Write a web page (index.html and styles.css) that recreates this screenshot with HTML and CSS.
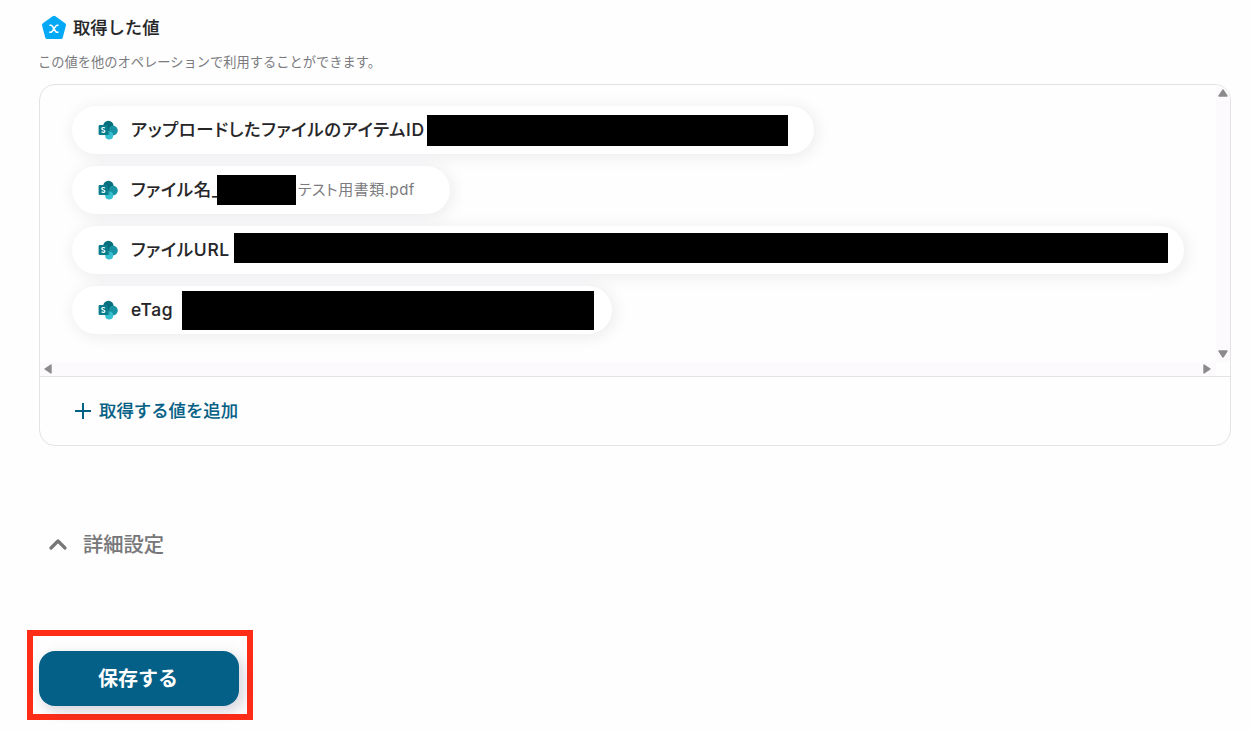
FILE: index.html
```
<!DOCTYPE html>
<html lang="ja">
<head>
<meta charset="UTF-8">
<meta name="viewport" content="width=device-width, initial-scale=1.0">
<title>取得した値</title>
<link rel="stylesheet" href="styles.css">
</head>
<body>
<svg class="defs" xmlns="http://www.w3.org/2000/svg">
    <symbol id="sharepoint" viewBox="0 0 20 20">
        <circle cx="10.4" cy="5.9" r="5.2" fill="#056f7d"/>
        <circle cx="15" cy="10.6" r="4.8" fill="#1893a3"/>
        <circle cx="11.2" cy="15.4" r="4" fill="#35bfd0"/>
        <path d="M7 5.5h4.5v9.5H7z" fill="#03494d" opacity=".3"/>
        <rect x="0.6" y="5" width="9.6" height="10" rx="1" fill="#087e8c"/>
        <path d="M7 8C5.8 7.2 3.8 7.4 3.8 8.7c0 1.5 3.1 1 3.1 2.5 0 1.3-2.1 1.4-3.3.6" fill="none" stroke="#fff" stroke-width="1.2"/>
    </symbol>
</svg>
<div class="page">
    <div class="section-title">
        <svg class="title-icon" xmlns="http://www.w3.org/2000/svg" viewBox="0 0 26 26">
            <path d="M11.6 1.3a2.3 2.3 0 0 1 2.8 0l9.7 7a2 2 0 0 1 .8 2.4l-3.2 12a2 2 0 0 1-2 1.4H6.3a2 2 0 0 1-2-1.4l-3.2-12a2 2 0 0 1 .8-2.4z" fill="#03a9f4"/>
            <path d="M8.4 10.3h1.4c2.8 0 3.6 7 6.4 7h1.4M17.5 10.3h-1.1c-2.8 0-4.2 7-7 7H8.2" fill="none" stroke="#fff" stroke-width="1.6"/>
        </svg>
        <h2>取得した値</h2>
    </div>
    <p class="description">この値を他のオペレーションで利用することができます。</p>

    <div class="values-box">
        <div class="values-scroll">
            <div class="value-list">
                <div class="value-item item-id">
                    <svg class="value-icon"><use href="#sharepoint"/></svg>
                    <span class="value-name">アップロードしたファイルのアイテムID</span>
                    <span class="mask"></span>
                </div>
                <div class="value-item item-file">
                    <svg class="value-icon"><use href="#sharepoint"/></svg>
                    <span class="value-name">ファイル名_</span>
                    <span class="mask"></span>
                    <span class="value-text">テスト用書類.pdf</span>
                </div>
                <div class="value-item item-url">
                    <svg class="value-icon"><use href="#sharepoint"/></svg>
                    <span class="value-name">ファイルURL</span>
                    <span class="mask"></span>
                </div>
                <div class="value-item item-etag">
                    <svg class="value-icon"><use href="#sharepoint"/></svg>
                    <span class="value-name">eTag</span>
                    <span class="mask"></span>
                </div>
            </div>
            <div class="scrollbar-y">
                <svg viewBox="0 0 10 8"><path d="M5 1L9 7H1z"/></svg>
                <svg viewBox="0 0 10 8"><path d="M5 7L9 1H1z"/></svg>
            </div>
            <div class="scrollbar-x">
                <svg viewBox="0 0 8 10"><path d="M1 5L7 1v8z"/></svg>
                <svg viewBox="0 0 8 10"><path d="M7 5L1 1v8z"/></svg>
            </div>
        </div>
        <button class="add-button">
            <svg viewBox="0 0 16 16"><path d="M8 0v16M0 8h16"/></svg>
            <span>取得する値を追加</span>
        </button>
    </div>

    <div class="advanced">
        <svg viewBox="0 0 18 12"><path d="M2 10l7-7 7 7"/></svg>
        <span>詳細設定</span>
    </div>

    <div class="save-frame">
        <button class="save-button">保存する</button>
    </div>
</div>
</body>
</html>
```
FILE: styles.css
```
* {
    margin: 0;
    padding: 0;
    box-sizing: border-box;
    font-family: Inter, 'Noto Sans CJK JP', sans-serif;
}

body {
    height: 730px;
    overflow: hidden;
    background-color: #fefefe;
    color: #252528;
}

button {
    border: none;
    background: none;
    cursor: pointer;
}

.defs {
    display: none;
}

.page {
    padding: 15px 21px 0 27px;
}

.section-title {
    display: flex;
    align-items: center;
    gap: 6px;
    height: 26px;
    padding-left: 14px;
}

.title-icon {
    width: 26px;
    height: 26px;
}

.section-title h2 {
    font-size: 17.3px;
    font-weight: 500;
    line-height: 26px;
    -webkit-text-stroke: 0.12px;
}

.description {
    margin: 11px 0 0 11px;
    font-size: 13.25px;
    line-height: 20px;
    color: #7b7b7e;
}

.values-box {
    margin: 12px 0 0 12px;
    height: 362px;
    border: 1px solid #e3e3e5;
    border-radius: 16px;
    overflow: hidden;
}

.values-scroll {
    display: grid;
    grid-template-columns: 1fr 14px;
    grid-template-rows: 1fr 14px;
    height: 292px;
    border-bottom: 1px solid #e3e3e5;
}

.value-list {
    display: flex;
    flex-direction: column;
    align-items: flex-start;
    gap: 12px;
    padding: 21px 0 0 32px;
}

.value-item {
    display: flex;
    align-items: center;
    height: 48px;
    padding-left: 26px;
    border-radius: 24px;
    background-color: #fff;
    box-shadow: 2px 2px 16px rgba(60, 45, 75, 0.1);
}

.value-icon {
    width: 20px;
    height: 20px;
    margin-right: 13px;
}

.value-name {
    padding-bottom: 3px;
    font-size: 17.4px;
    font-weight: 500;
    letter-spacing: 0.66px;
    font-feature-settings: 'palt';
    white-space: nowrap;
    -webkit-text-stroke: 0.12px;
}

.value-text {
    margin-left: 2px;
    padding-bottom: 3px;
    font-size: 15px;
    letter-spacing: 0.5px;
    color: #7b7b7e;
    font-feature-settings: 'palt';
}

.mask {
    background-color: #000;
}

.item-id {
    width: 742px;
}

.item-id .mask {
    width: 361px;
    height: 31px;
    margin-left: auto;
    margin-right: 26px;
}

.item-file {
    width: 378px;
}

.item-file .value-name {
    width: 86px;
}

.item-file .mask {
    position: relative;
    width: 79px;
    height: 30px;
}

.item-url {
    width: 1112px;
}

.item-url .mask {
    width: 934px;
    height: 30px;
    margin: 0 16px 5px auto;
}

.item-etag {
    width: 540px;
}

.item-etag .value-name {
    padding-bottom: 1px;
}

.item-etag .mask {
    width: 412px;
    height: 39px;
    margin-left: auto;
    margin-right: 18px;
}

.scrollbar-y,
.scrollbar-x {
    display: flex;
    justify-content: space-between;
    align-items: center;
    background-color: #fcfafd;
}

.scrollbar-y {
    flex-direction: column;
    padding: 4px 1px 4px 0;
}

.scrollbar-x {
    padding: 0 5px 1px 4px;
}

.scrollbar-y svg {
    width: 10px;
    height: 8px;
}

.scrollbar-x svg {
    width: 8px;
    height: 10px;
}

.scrollbar-y path,
.scrollbar-x path {
    fill: #8b8b8d;
    stroke: #8b8b8d;
    stroke-width: 1.4;
    stroke-linejoin: round;
}

.add-button {
    display: flex;
    align-items: center;
    gap: 8px;
    height: 68px;
    padding-left: 35px;
    color: #056085;
}

.add-button span {
    padding-bottom: 3px;
    font-size: 17.4px;
    font-weight: 500;
    -webkit-text-stroke: 0.12px;
}

.add-button svg {
    width: 16px;
    height: 16px;
}

.add-button path {
    stroke: #056085;
    stroke-width: 2;
}

.advanced {
    display: flex;
    align-items: center;
    gap: 16px;
    height: 30px;
    margin: 83px 0 0 22px;
    font-size: 20.3px;
    font-weight: 500;
    color: #777779;
    -webkit-text-stroke: 0.12px;
}

.advanced span {
    padding-bottom: 2px;
}

.advanced svg {
    width: 18px;
    height: 12px;
}

.advanced path {
    fill: none;
    stroke: #777779;
    stroke-width: 3.2;
    stroke-linecap: round;
    stroke-linejoin: round;
}

.save-frame {
    width: 226px;
    height: 90px;
    margin-top: 71px;
    padding: 15px 6px;
    border: 6px solid #ff2d17;
}

.save-button {
    width: 200px;
    height: 55px;
    padding: 0 2px 3px 0;
    border-radius: 16px;
    background-color: #046087;
    box-shadow: 4px 5px 14px rgba(50, 50, 90, 0.22);
    color: #fff;
    font-size: 20px;
    font-weight: 700;
}
```
